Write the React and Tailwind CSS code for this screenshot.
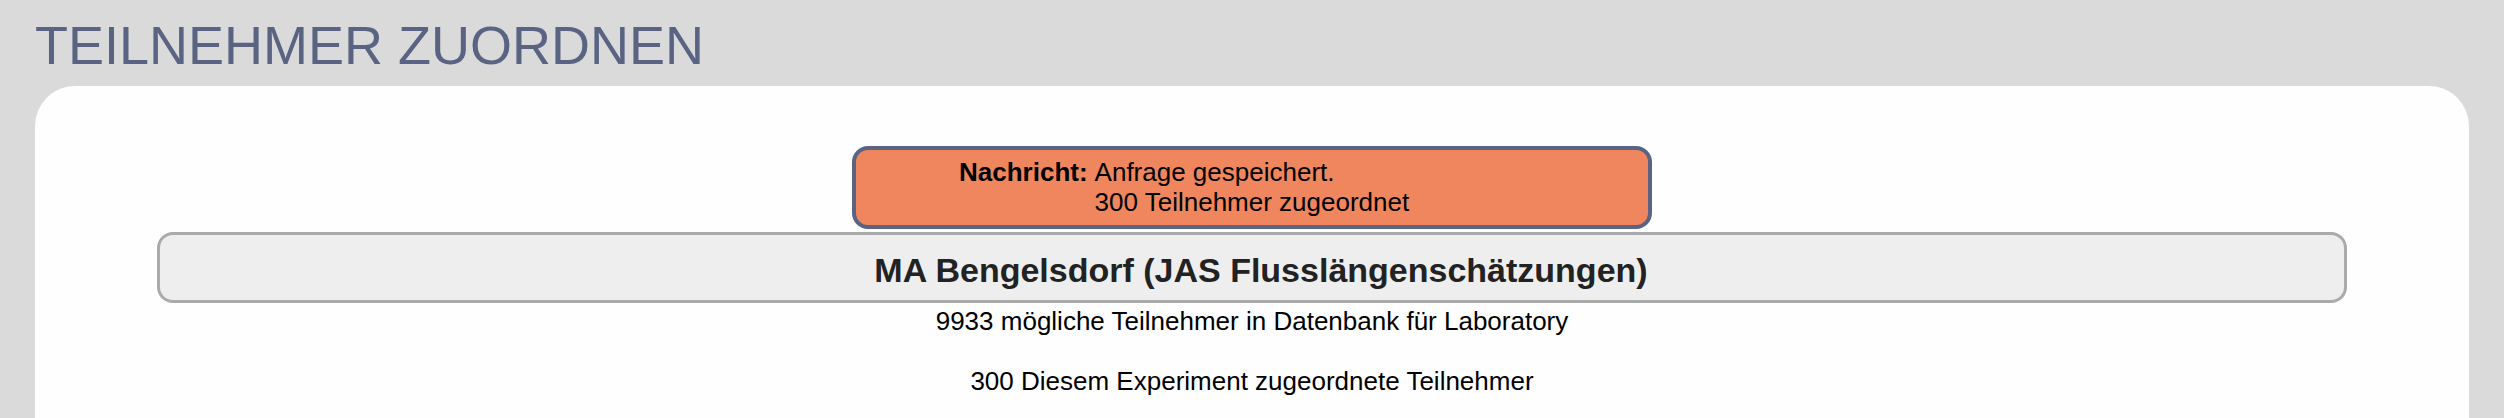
import React from "react";

const font = { fontFamily: '"Liberation Sans", Arial, Helvetica, sans-serif' };

const Notice = ({ label, lines }) => (
  <div className="mx-auto box-border flex h-[83px] w-[800px] rounded-[16px] border-4 border-[#5a6482] bg-[#ef865e] pl-[103px] pt-[7px] text-[26px] leading-[30px] text-black">
    <span className="font-bold">{label}</span>
    <div className="ml-[7px]">
      {lines.map((line) => (
        <div key={line}>{line}</div>
      ))}
    </div>
  </div>
);

const App = () => {
  return (
    <div className="min-h-screen bg-[#dadada] px-[35px] pt-[14px]" style={font}>
      <h1 className="text-[54px] font-normal leading-[62px] text-[#5a6482]">
        TEILNEHMER ZUORDNEN
      </h1>

      <div className="mt-[10px] min-h-[400px] rounded-t-[40px] bg-[#fefefe] pt-[60px]">
        <Notice
          label="Nachricht:"
          lines={["Anfrage gespeichert.", "300 Teilnehmer zugeordnet"]}
        />

        <div className="mx-auto mt-[3px] box-border flex h-[71px] w-[90%] items-center justify-center rounded-[16px] border-[3px] border-[#aaaaaa] bg-[#eeeeee] pl-[18px] pt-[4px]">
          <h2 className="text-[34px] font-bold leading-[40px] text-[#222222]">
            MA Bengelsdorf (JAS Flusslängenschätzungen)
          </h2>
        </div>

        <div className="text-center text-[26px] leading-[30px] text-black">
          <p className="mt-[3px]">9933 mögliche Teilnehmer in Datenbank für Laboratory</p>
          <p className="mt-[30px]">300 Diesem Experiment zugeordnete Teilnehmer</p>
        </div>
      </div>
    </div>
  );
};

export default App;
